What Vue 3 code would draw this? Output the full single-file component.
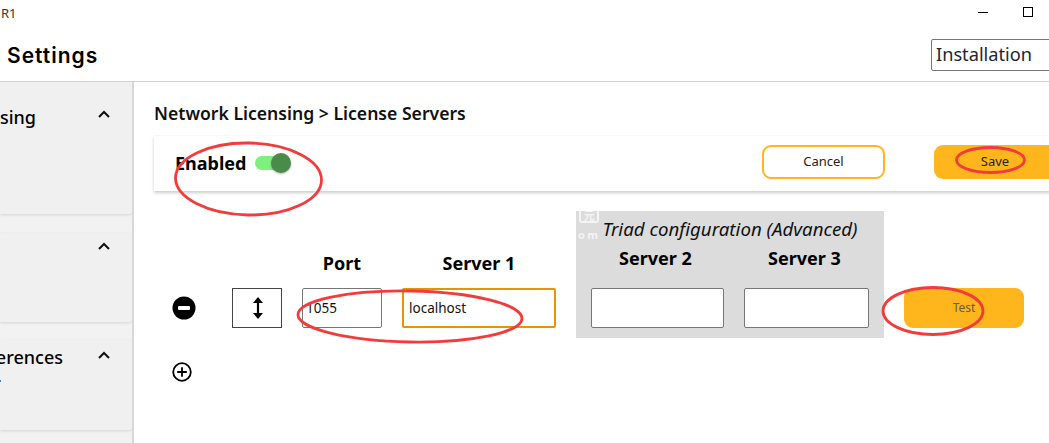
<script setup>
const ellipses = [
  { cx: 248.5, cy: 179, rx: 73, ry: 36, rot: 1 },
  { cx: 990.5, cy: 160, rx: 34, ry: 12.5, rot: 0 },
  { cx: 410, cy: 316.5, rx: 112, ry: 25.5, rot: 1 },
  { cx: 933, cy: 311, rx: 50, ry: 23.5, rot: 0 },
]
</script>

<template>
  <div class="page">
    <header class="titlebar">
      <span class="app-name">R1</span>
      <div class="win-controls">
        <span class="win-min"></span>
        <span class="win-max"></span>
      </div>
    </header>

    <div class="headbar">
      <h1 class="page-title">Settings</h1>
      <div class="select">Installation</div>
    </div>

    <div class="body">
      <aside class="sidebar">
        <section class="side-card first">
          <div class="side-head"><span class="side-label w36">Network Licensing</span><svg class="chev" viewBox="0 0 12 8"><path d="M1 7 L6 2 L11 7" /></svg></div>
        </section>
        <section class="side-card second">
          <div class="side-head"><span class="side-label w36"></span><svg class="chev" viewBox="0 0 12 8"><path d="M1 7 L6 2 L11 7" /></svg></div>
        </section>
        <section class="side-card third">
          <div class="side-head"><span class="side-label w63">Preferences</span><svg class="chev" viewBox="0 0 12 8"><path d="M1 7 L6 2 L11 7" /></svg></div>
          <span class="side-mark"></span>
        </section>
      </aside>

      <main class="main">
        <h2 class="crumb">Network Licensing &gt; License Servers</h2>

        <div class="bar">
          <div class="enabled">
            <span class="enabled-text">Enabled</span>
            <span class="toggle"><span class="knob"></span></span>
          </div>
          <button class="btn outline">Cancel</button>
          <button class="btn solid save">Save</button>
        </div>

        <div class="row">
          <svg class="round-icon minus" viewBox="0 0 24 24">
            <circle cx="12" cy="12" r="11.5" fill="#000" />
            <rect x="6" y="10" width="12" height="4" rx="1" fill="#fff" />
          </svg>

          <div class="handle">
            <svg viewBox="0 0 12 24" width="12" height="24">
              <path d="M6 3 V21" stroke="#000" stroke-width="2.2" />
              <path d="M1 7 L6 1 L11 7 Z M1 17 L6 23 L11 17 Z" fill="#000" />
            </svg>
          </div>

          <div class="col port">
            <div class="col-label">Port</div>
            <div class="field">1055</div>
          </div>

          <div class="col server1">
            <div class="col-label">Server 1</div>
            <div class="field active">localhost</div>
          </div>

          <div class="triad">
            <div class="watermark">
              <span class="wm-box">元</span>
              <span class="wm-text">om</span>
            </div>
            <div class="triad-title">Triad configuration (Advanced)</div>
            <div class="triad-cols">
              <div class="col server2">
                <div class="col-label">Server 2</div>
                <div class="field"></div>
              </div>
              <div class="col server3">
                <div class="col-label">Server 3</div>
                <div class="field"></div>
              </div>
            </div>
          </div>

          <button class="btn solid test">Test</button>
        </div>

        <svg class="round-icon plus" viewBox="0 0 20 20">
          <circle cx="10" cy="10" r="8.800" fill="none" stroke="#000" stroke-width="1.800" />
          <path d="M5.200 10 H14.800 M10 5.200 V14.800" stroke="#000" stroke-width="1.800" />
        </svg>
      </main>
    </div>

    <svg class="annotations" width="1049" height="443" viewBox="0 0 1049 443">
      <ellipse
        v-for="(e, i) in ellipses"
        :key="i"
        :cx="e.cx"
        :cy="e.cy"
        :rx="e.rx"
        :ry="e.ry"
        :transform="`rotate(${e.rot} ${e.cx} ${e.cy})`"
        fill="none"
        stroke="#f23c3c"
        stroke-width="2.800"
      />
    </svg>
  </div>
</template>

<style>
html, body { margin: 0; overflow: hidden; background: #fff; }
</style>

<style scoped>
.page {
  position: relative;
  width: 1049px;
  height: 443px;
  overflow: hidden;
  background: #fff;
  font-family: "Noto Sans", "Open Sans", sans-serif;
  color: #000;
}
.titlebar {
  height: 28px;
  display: flex;
  justify-content: space-between;
  box-sizing: border-box;
}
.app-name {
  font-size: 13px;
  line-height: 26px;
  margin-left: 1px;
  color: #4a3218;
}
.win-controls {
  display: flex;
  align-items: flex-start;
  gap: 35px;
  padding: 7px 16px 0 0;
}
.win-min { width: 10px; height: 1px; background: #000; margin-top: 5px; }
.win-max { width: 8px; height: 8px; border: 1px solid #000; }
.headbar {
  height: 54px;
  display: flex;
  justify-content: space-between;
  align-items: flex-start;
  border-bottom: 1px solid #d2d2d2;
  box-sizing: border-box;
}
.page-title {
  margin: 13px 0 0 7px;
  font-family: Inter, "Noto Sans", sans-serif;
  font-size: 21px;
  letter-spacing: 1px;
  line-height: 30px;
  font-weight: 600;
}
.select {
  width: 128px;
  height: 32px;
  margin: 11px -10px 0 0;
  box-sizing: border-box;
  border: 1px solid #767676;
  border-radius: 2px;
  padding-left: 4px;
  font-size: 18.2px;
  line-height: 28px;
  color: #1c2530;
}
.body {
  display: flex;
  height: 361px;
}
.sidebar {
  width: 134px;
  flex: none;
  box-sizing: border-box;
  border-right: 2px solid #d8d8d8;
  background: #f2f2f2;
  overflow: hidden;
}
.side-card {
  position: relative;
  background: #f0f0f0;
  box-shadow: 0 1px 3px rgba(0, 0, 0, 0.12);
  border-radius: 0 0 3px 0;
  box-sizing: border-box;
}
.side-card.first { height: 132px; padding-top: 22px; }
.side-card.second { height: 89px; margin-top: 19px; padding-top: 2px; }
.side-card.third { height: 90px; margin-top: 18px; padding-top: 3px; }
.side-head {
  display: flex;
  justify-content: space-between;
  align-items: flex-start;
  height: 26px;
  padding-right: 22px;
  box-sizing: border-box;
}
.side-label {
  display: flex;
  justify-content: flex-end;
  white-space: nowrap;
  font-size: 18px;
  font-weight: 500;
  line-height: 26px;
}
.third .side-label { margin-top: 1px; }
.w36 { width: 36px; }
.w63 { width: 63px; }
.chev {
  width: 12px;
  height: 8px;
  margin-top: 6px;
  overflow: visible;
}
.chev path {
  fill: none;
  stroke: #111;
  stroke-width: 2;
}
.side-card.second .chev { margin-top: 7px; }
.side-card.third .chev { margin-top: 8px; }
.side-mark {
  position: absolute;
  left: 0;
  top: 40px;
  width: 1px;
  height: 2px;
  background: #2a8cd8;
}
.main {
  flex: 1;
  min-width: 0;
  padding: 18px 0 0 20px;
  box-sizing: border-box;
}
.crumb {
  margin: 0;
  font-size: 17.6px;
  line-height: 26px;
  font-weight: 600;
  white-space: nowrap;
  color: #111;
}
.bar {
  margin: 10px -40px 0 0;
  height: 55px;
  display: flex;
  align-items: flex-start;
  padding-top: 9px;
  box-sizing: border-box;
  background: #fff;
  box-shadow: 0 2px 3px rgba(0, 0, 0, 0.2), 0 -1px 1px rgba(0, 0, 0, 0.02);
}
.enabled {
  flex: 1;
  display: flex;
  align-items: center;
  height: 36px;
  padding-left: 21px;
}
.enabled-text {
  font-size: 18px;
  font-weight: 700;
  line-height: 36px;
}
.toggle {
  position: relative;
  width: 30px;
  height: 14px;
  margin-left: 9px;
  border-radius: 7px;
  background: #7ef07e;
}
.knob {
  position: absolute;
  right: -6px;
  top: -3px;
  width: 20px;
  height: 20px;
  border-radius: 50%;
  background: #4a8b4a;
  box-shadow: 0 1px 2px rgba(0, 0, 0, 0.3);
}
.btn {
  font-family: inherit;
  font-size: 13px;
  border-radius: 9px;
  box-sizing: border-box;
  padding: 0 0 2px;
  color: #222;
}
.btn.outline {
  width: 123px;
  height: 34px;
  background: #fff;
  border: 2px solid #ffb61c;
}
.btn.solid {
  background: #ffb61c;
  border: none;
}
.save {
  width: 155px;
  height: 34px;
  margin-left: 49px;
  padding-right: 33px;
}
.row {
  display: flex;
  align-items: flex-end;
  gap: 20px;
  margin-top: 20px;
  height: 127px;
  padding-left: 18px;
}
.round-icon { display: block; flex: none; }
.minus {
  width: 24px;
  height: 24px;
  margin: 0 16px 18px 0;
}
.handle {
  flex: none;
  width: 50px;
  height: 40px;
  margin-bottom: 10px;
  padding-left: 2px;
  box-sizing: border-box;
  border: 1px solid #444;
  display: flex;
  align-items: center;
  justify-content: center;
}
.col { flex: none; display: flex; flex-direction: column; }
.port { width: 80px; margin-bottom: 10px; }
.server1 { width: 154px; margin-bottom: 10px; }
.server2 { width: 133px; }
.server3 { width: 125px; }
.col-label {
  text-align: center;
  font-size: 18px;
  font-weight: 700;
  line-height: 24px;
  height: 37px;
  color: #000;
}
.field {
  height: 40px;
  box-sizing: border-box;
  border: 1px solid #767676;
  border-radius: 2px;
  background: #fff;
  font-size: 13.5px;
  line-height: 38px;
  padding-left: 3px;
  color: #111;
}
.field.active {
  border: 2px solid #e69500;
  line-height: 36px;
  padding-left: 5px;
}
.triad {
  position: relative;
  flex: none;
  width: 308px;
  height: 127px;
  box-sizing: border-box;
  padding: 5px 15px 0;
  background: #dcdcdc;
}
.triad-title {
  font-size: 18.7px;
  font-style: italic;
  line-height: 26px;
  text-align: center;
  white-space: nowrap;
  color: #111;
}
.triad-cols {
  display: flex;
  gap: 20px;
  margin-top: 4px;
}
.triad .col-label { height: 42px; line-height: 25px; padding-right: 4px; box-sizing: border-box; }
.watermark {
  position: absolute;
  left: 2px;
  top: 0;
  display: flex;
  flex-direction: column;
  align-items: center;
  color: #f4f4f4;
  font-weight: 700;
}
.wm-box {
  width: 20px;
  height: 12px;
  box-sizing: border-box;
  border: 2px solid #f4f4f4;
  border-top: none;
  border-radius: 0 0 3px 3px;
  font-family: "Noto Sans CJK SC", sans-serif;
  font-size: 11px;
  line-height: 8px;
  text-align: center;
  overflow: hidden;
}
.wm-text {
  font-size: 11px;
  letter-spacing: 2.5px;
  line-height: 12px;
  margin-top: 6px;
}
.test {
  flex: none;
  width: 120px;
  height: 40px;
  margin-bottom: 10px;
  font-size: 12px;
  color: #6b5a3a;
}
.plus {
  width: 20px;
  height: 20px;
  margin: 24px 0 0 18px;
}
.annotations {
  position: absolute;
  left: 0;
  top: 0;
  pointer-events: none;
}
</style>
